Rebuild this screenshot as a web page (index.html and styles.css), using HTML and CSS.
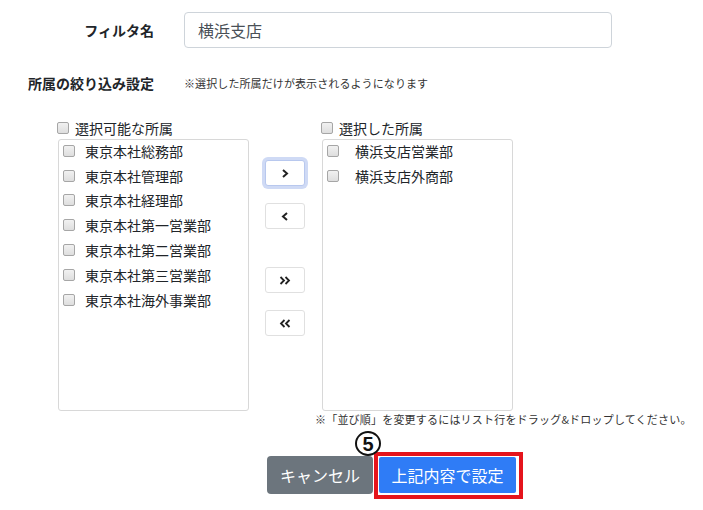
FILE: index.html
```html
<!DOCTYPE html>
<html lang="ja">
<head>
<meta charset="utf-8">
<link rel="stylesheet" href="styles.css">
</head>
<body>
<div class="page">
  <div class="form-row name-row">
    <label class="form-label">フィルタ名</label>
    <input class="text-input" type="text" value="横浜支店">
  </div>
  <div class="form-row filter-row">
    <span class="form-label">所属の絞り込み設定</span>
    <span class="hint">※選択した所属だけが表示されるようになります</span>
  </div>

  <div class="transfer">
    <div class="list-col">
      <div class="list-head"><input type="checkbox" class="cb"><span>選択可能な所属</span></div>
      <ul class="list-box">
        <li class="list-item"><input type="checkbox" class="cb"><span>東京本社総務部</span></li>
        <li class="list-item"><input type="checkbox" class="cb"><span>東京本社管理部</span></li>
        <li class="list-item"><input type="checkbox" class="cb"><span>東京本社経理部</span></li>
        <li class="list-item"><input type="checkbox" class="cb"><span>東京本社第一営業部</span></li>
        <li class="list-item"><input type="checkbox" class="cb"><span>東京本社第二営業部</span></li>
        <li class="list-item"><input type="checkbox" class="cb"><span>東京本社第三営業部</span></li>
        <li class="list-item"><input type="checkbox" class="cb"><span>東京本社海外事業部</span></li>
      </ul>
    </div>

    <div class="move-col">
      <button class="move-btn focused" type="button" aria-label="add">
        <svg width="8" height="9" viewBox="0 0 8 9"><path d="M2 1 L6 4.5 L2 8" fill="none" stroke="#222" stroke-width="2"/></svg>
      </button>
      <button class="move-btn" type="button" aria-label="remove">
        <svg width="8" height="9" viewBox="0 0 8 9"><path d="M6 1 L2 4.5 L6 8" fill="none" stroke="#222" stroke-width="2"/></svg>
      </button>
      <button class="move-btn gap-top" type="button" aria-label="add all">
        <svg width="12" height="9" viewBox="0 0 12 9"><path d="M1.5 1 L5 4.5 L1.5 8 M6.5 1 L10 4.5 L6.5 8" fill="none" stroke="#222" stroke-width="1.8"/></svg>
      </button>
      <button class="move-btn" type="button" aria-label="remove all">
        <svg width="12" height="9" viewBox="0 0 12 9"><path d="M5.5 1 L2 4.5 L5.5 8 M10.5 1 L7 4.5 L10.5 8" fill="none" stroke="#222" stroke-width="1.8"/></svg>
      </button>
    </div>

    <div class="list-col">
      <div class="list-head"><input type="checkbox" class="cb"><span>選択した所属</span></div>
      <ul class="list-box selected">
        <li class="list-item"><input type="checkbox" class="cb"><span>横浜支店営業部</span></li>
        <li class="list-item"><input type="checkbox" class="cb"><span>横浜支店外商部</span></li>
      </ul>
    </div>
  </div>

  <p class="order-note">※「並び順」を変更するにはリスト行をドラッグ&amp;ドロップしてください。</p>

  <div class="actions">
    <button class="btn btn-cancel" type="button">キャンセル</button>
    <div class="highlight">
      <span class="step">5</span>
      <button class="btn btn-primary" type="button">上記内容で設定</button>
    </div>
  </div>
</div>
</body>
</html>
```
FILE: styles.css
```css
* { box-sizing: border-box; }
html, body {
  margin: 0;
  padding: 0;
  background: #fff;
}
body {
  font-family: "Noto Sans CJK JP", "Noto Sans", sans-serif;
  color: #212529;
  width: 703px;
  height: 510px;
  overflow: hidden;
}
.page {
  padding-top: 12px;
}
.form-row {
  display: flex;
  align-items: center;
}
.form-label {
  width: 154px;
  text-align: right;
  font-size: 14px;
  font-weight: bold;
  color: #212529;
  margin-right: 30px;
  line-height: 20px;
}
.text-input {
  width: 428px;
  height: 36px;
  border: 1px solid #ced4da;
  border-radius: 4px;
  padding: 0 13px;
  font-family: inherit;
  font-size: 16px;
  color: #495057;
  background: #fff;
  outline: none;
}
.filter-row {
  margin-top: 25px;
  height: 20px;
}
.hint {
  font-size: 11px;
  color: #333;
  line-height: 20px;
  letter-spacing: 0.1px;
}
.transfer {
  display: flex;
  align-items: flex-start;
  margin-top: 26px;
  padding-left: 58px;
}
.list-col {
  width: 191px;
  display: flex;
  flex-direction: column;
}
.list-head {
  height: 18px;
  display: flex;
  align-items: center;
  font-size: 14px;
  line-height: 18px;
  margin-left: -1px;
}
.list-head .cb {
  margin-right: 6px;
}
.cb {
  appearance: none;
  -webkit-appearance: none;
  width: 12px;
  height: 12px;
  margin: 0;
  border: 1px solid #a6a6a6;
  border-radius: 2px;
  background: linear-gradient(#f1f1f1, #dedede);
  flex: none;
}
.list-box {
  list-style: none;
  margin: 2px 0 0;
  padding: 0 0 0 4px;
  height: 272px;
  border: 1px solid #d8d8d8;
  border-radius: 3px;
  background: #fff;
}
.list-item {
  height: 24.8px;
  display: flex;
  align-items: center;
  padding-bottom: 3px;
  font-size: 14px;
  color: #212529;
}
.list-item .cb {
  margin-right: 10px;
}
.selected .list-item .cb {
  margin-right: 16px;
}
.move-col {
  width: 40px;
  margin: 41px 17px 0 16px;
  display: flex;
  flex-direction: column;
}
.move-btn {
  width: 40px;
  height: 26px;
  border: 1px solid #e0e0e0;
  border-radius: 3px;
  background: #fff;
  padding: 0;
  display: flex;
  align-items: center;
  justify-content: center;
  margin-bottom: 17px;
}
.move-btn.focused {
  border-color: #b8c8ee;
  box-shadow: 0 0 0 3px #cfdaf5;
}
.move-btn.gap-top {
  margin-top: 21px;
}
.order-note {
  margin: 1px 0 0;
  padding-left: 315px;
  font-size: 11px;
  line-height: 14px;
  color: #333;
  letter-spacing: 0.2px;
}
.actions {
  display: flex;
  align-items: flex-start;
  margin-top: 26px;
  padding-left: 267px;
}
.btn {
  font-family: inherit;
  font-size: 16px;
  color: #fff;
  border: none;
  border-radius: 4px;
  padding: 0;
}
.btn-cancel {
  width: 106px;
  height: 38px;
  margin-top: 4px;
  background: #6c757d;
  margin-right: 1px;
}
.highlight {
  position: relative;
  width: 149px;
  height: 47px;
  border: 4px solid #e5141c;
  padding: 1px 3px 2px 1px;
}
.btn-primary {
  width: 137px;
  height: 36px;
  background: #2f7cf6;
  border-radius: 2px;
}
.step {
  position: absolute;
  left: -23px;
  top: -25px;
  width: 26px;
  height: 25px;
  border: 2.5px solid #111;
  border-radius: 50%;
  display: flex;
  align-items: center;
  justify-content: center;
  font-family: "Liberation Sans", Arial, sans-serif;
  font-size: 20px;
  line-height: 20px;
  font-weight: bold;
  color: #111;
}
```
